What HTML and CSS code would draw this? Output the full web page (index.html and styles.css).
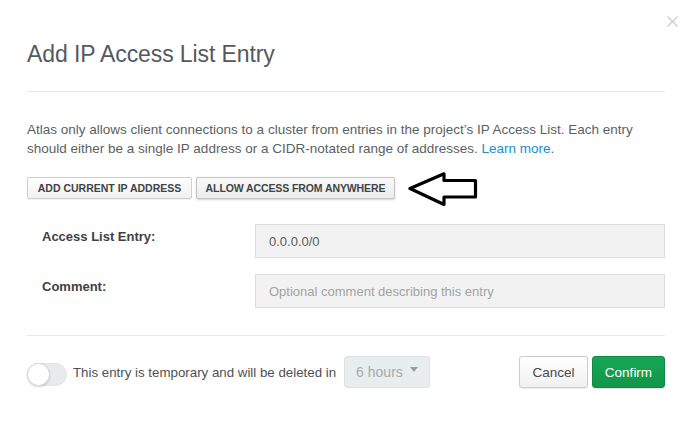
FILE: index.html
```html
<!DOCTYPE html>
<html>
<head>
<meta charset="utf-8">
<link rel="stylesheet" href="styles.css">
</head>
<body>
<div class="modal">
  <button class="close" aria-label="Close">
    <svg width="11" height="11" viewBox="0 0 11 11"><path d="M0.5 0.5 L10.5 10.5 M10.5 0.5 L0.5 10.5" stroke="#c9c9c9" stroke-width="1.1" fill="none"/></svg>
  </button>
  <div class="header">
    <h1 class="title">Add IP Access List Entry</h1>
  </div>
  <p class="intro">Atlas only allows client connections to a cluster from entries in the project’s IP Access List. Each entry should either be a single IP address or a CIDR-notated range of addresses. <a href="#" class="link">Learn more</a>.</p>
  <div class="quick">
    <button class="btn-small btn-first">ADD CURRENT IP ADDRESS</button>
    <button class="btn-small btn-pressed">ALLOW ACCESS FROM ANYWHERE</button>
    <svg class="arrow" width="70" height="36" viewBox="0 0 70 36">
      <path d="M2 16.5 L36 1.8 L36 8.5 L67.5 8.5 L67.5 25 L36 25 L36 32.5 Z" fill="none" stroke="#000" stroke-width="3.2" stroke-linejoin="round"/>
    </svg>
  </div>
  <div class="form">
    <div class="row">
      <label class="label">Access List Entry:</label>
      <input class="field" type="text" value="0.0.0.0/0">
    </div>
    <div class="row">
      <label class="label">Comment:</label>
      <input class="field" type="text" placeholder="Optional comment describing this entry">
    </div>
  </div>
  <div class="footer">
    <div class="temp">
      <span class="toggle"><span class="knob"></span></span>
      <span class="temp-text">This entry is temporary and will be deleted in</span>
      <span class="select">6 hours<span class="caret"></span></span>
    </div>
    <div class="actions">
      <button class="btn btn-cancel">Cancel</button>
      <button class="btn btn-confirm">Confirm</button>
    </div>
  </div>
</div>
</body>
</html>
```
FILE: styles.css
```css
* { box-sizing: border-box; }
html, body { margin: 0; padding: 0; background: #fff; }
body {
  font-family: "Liberation Sans", Arial, sans-serif;
  color: #494f53;
  width: 699px;
  height: 423px;
  overflow: hidden;
}
.modal {
  position: relative;
  padding: 0 34px 0 27px;
}
.close {
  position: absolute;
  top: 16px;
  right: 21px;
  width: 11px;
  height: 11px;
  padding: 0;
  border: 0;
  background: none;
  display: block;
}
.close svg { display: block; }
.header {
  padding: 39px 0 22px;
  border-bottom: 1px solid #e8e8e8;
}
.title {
  margin: 0;
  font-size: 23px;
  line-height: 30px;
  font-weight: normal;
  color: #55595d;
  letter-spacing: -0.1px;
}
.intro {
  margin: 28px 0 0;
  font-size: 13.5px;
  line-height: 19px;
  color: #5b5f62;
}
.link { color: #1a8ec8; text-decoration: none; }
.quick {
  margin-top: 19px;
  display: flex;
  align-items: center;
  height: 22px;
}
.btn-small {
  height: 22px;
  padding: 0 8px;
  margin-right: 4px;
  font-family: "Liberation Sans", Arial, sans-serif;
  font-size: 10.5px;
  font-weight: bold;
  color: #404446;
  letter-spacing: 0;
  background: linear-gradient(#ffffff, #f1f1f1);
  border: 1px solid #cfcfcf;
  border-radius: 2px;
  box-shadow: 0 1px 1px rgba(0,0,0,0.06);
}
.btn-first { width: 165px; padding: 0; }
.btn-pressed {
  width: 199px;
  padding: 0;
  background: linear-gradient(#f9f9f9, #ececec);
  border-color: #c4c4c4;
  box-shadow: 0 1px 2px rgba(0,0,0,0.18);
  letter-spacing: -0.1px;
}
.arrow {
  margin-left: 9px;
  margin-top: 3px;
  flex: none;
}
.form {
  margin-top: 25px;
  padding-bottom: 27px;
  border-bottom: 1px solid #e8e8e8;
}
.row {
  display: flex;
  align-items: flex-start;
  margin-bottom: 16px;
}
.row:last-child { margin-bottom: 0; }
.label {
  width: 228px;
  padding-left: 15px;
  padding-top: 5px;
  font-size: 13px;
  font-weight: bold;
  color: #3d4144;
  line-height: 16px;
}
.field {
  flex: 1;
  height: 34px;
  margin: 0;
  padding: 0 13px;
  font-family: "Liberation Sans", Arial, sans-serif;
  font-size: 13px;
  color: #555a5d;
  background: #f2f2f2;
  border: 1px solid #dcdcdc;
  border-radius: 0;
  outline: none;
}
.field::placeholder { color: #a3a3a3; }
.footer {
  display: flex;
  align-items: center;
  justify-content: space-between;
  padding-top: 20px;
}
.temp {
  display: flex;
  align-items: center;
}
.toggle {
  position: relative;
  width: 40px;
  height: 23px;
  border-radius: 12px;
  background: #e8eaeb;
  border: 1px solid #e1e3e4;
  margin-top: 5px;
  margin-right: 6px;
}
.knob {
  position: absolute;
  left: -1px;
  top: -1px;
  width: 23px;
  height: 23px;
  border-radius: 50%;
  background: #fff;
  border: 1px solid #d6d6d6;
  box-shadow: 0 1px 2px rgba(0,0,0,0.15);
}
.temp-text {
  font-size: 13.3px;
  color: #4c5154;
  margin-right: 8px;
}
.select {
  position: relative;
  display: flex;
  align-items: center;
  width: 86px;
  height: 32px;
  padding-left: 11px;
  font-size: 14px;
  color: #a8abab;
  background: #e8eded;
  border: 1px solid #dde2e2;
  border-radius: 3px;
}
.caret {
  position: absolute;
  right: 11px;
  top: 10px;
  width: 0;
  height: 0;
  border-left: 4px solid transparent;
  border-right: 4px solid transparent;
  border-top: 5px solid #9a9d9d;
}
.actions {
  display: flex;
  gap: 4px;
}
.btn {
  height: 32px;
  font-family: "Liberation Sans", Arial, sans-serif;
  font-size: 13.5px;
  border-radius: 3px;
  padding: 0;
}
.btn-cancel {
  width: 69px;
  color: #464a4d;
  background: linear-gradient(#ffffff, #f0f0f0);
  border: 1px solid #cdcdcd;
  box-shadow: 0 1px 1px rgba(0,0,0,0.08);
}
.btn-confirm {
  width: 73px;
  color: #fff;
  background: linear-gradient(#18a556, #12964a);
  border: 1px solid #0f8a44;
  box-shadow: 0 1px 1px rgba(0,0,0,0.12);
}
```
